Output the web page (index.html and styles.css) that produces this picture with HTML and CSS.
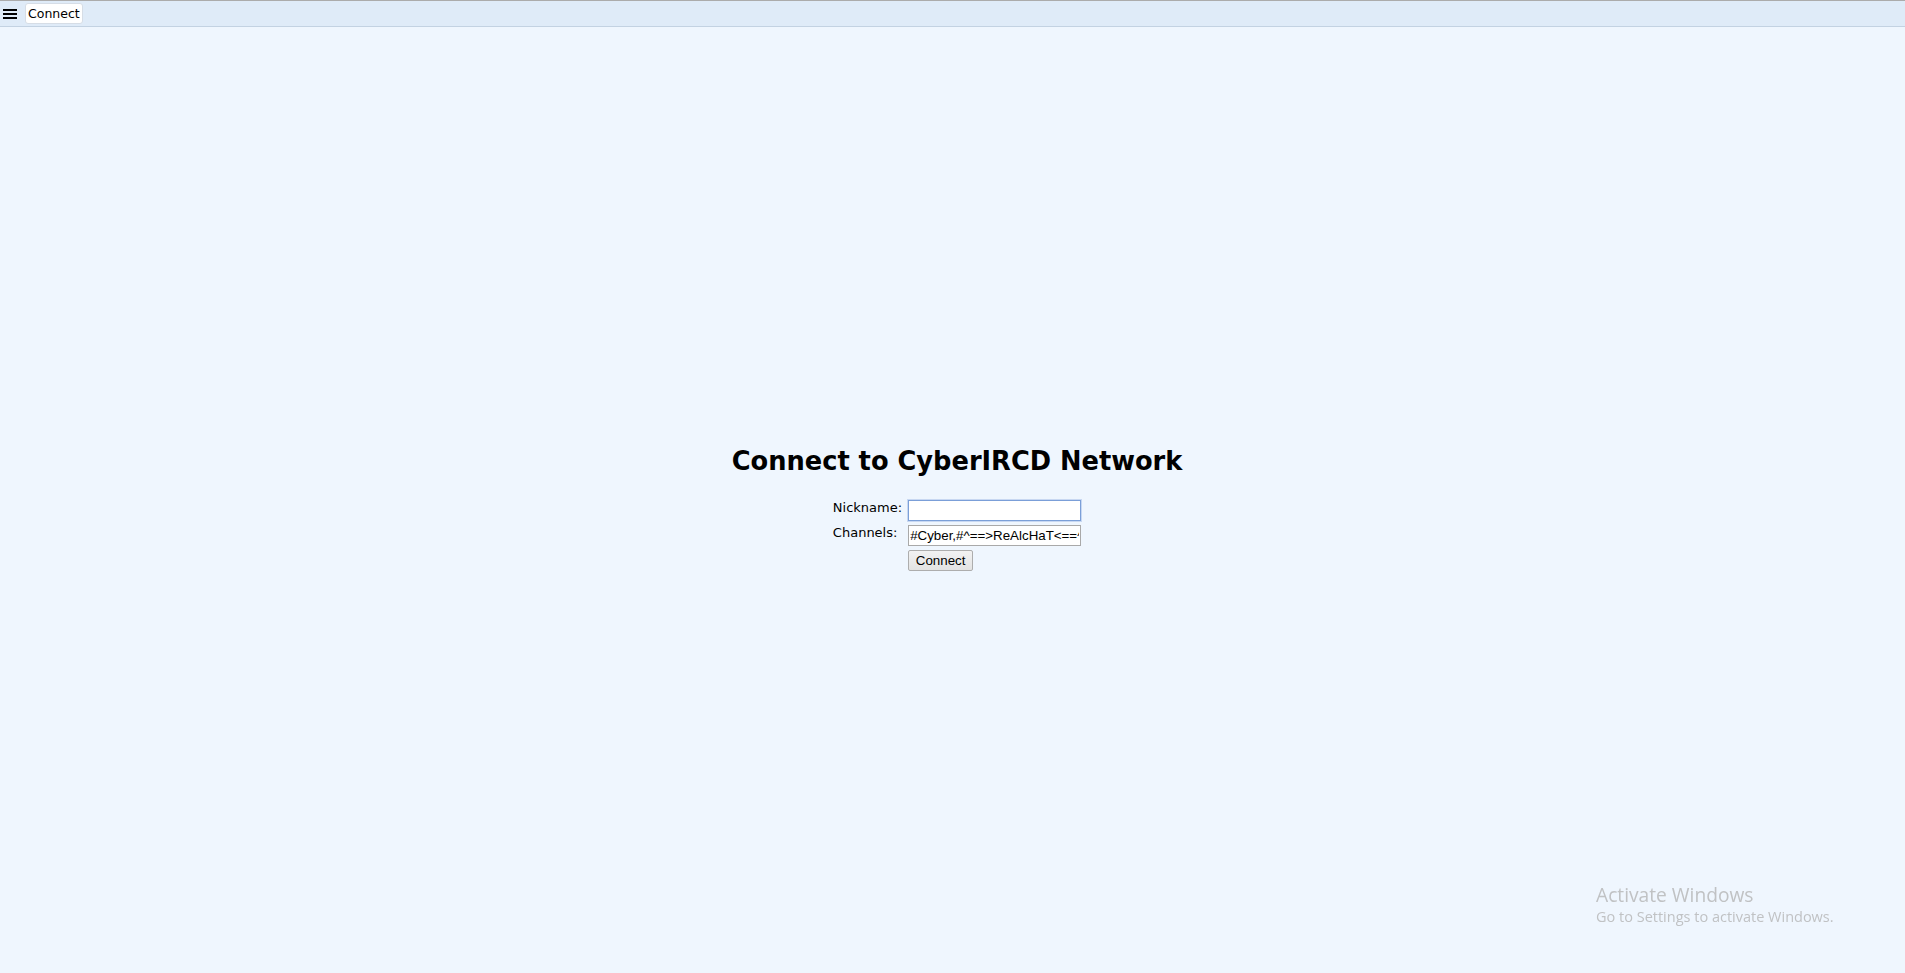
FILE: index.html
```html
<!DOCTYPE html>
<html lang="en">
<head>
<meta charset="utf-8">
<title>CyberIRCD</title>
<link rel="stylesheet" href="styles.css">
</head>
<body>
<div class="app">
  <header class="topbar">
    <button class="menu-btn" aria-label="Menu">
      <svg width="14" height="10" viewBox="0 0 14 10"><rect x="0" y="0" width="14" height="2" fill="#000"/><rect x="0" y="4" width="14" height="2" fill="#000"/><rect x="0" y="8" width="14" height="2" fill="#000"/></svg>
    </button>
    <div class="tab">Connect</div>
  </header>
  <main class="main">
    <div class="connect">
      <h1 class="title">Connect to CyberIRCD Network</h1>
      <form class="form">
        <label class="label" for="nick">Nickname:</label>
        <input id="nick" class="field field-focus" type="text">
        <label class="label" for="chan">Channels:</label>
        <input id="chan" class="field" type="text" value="#Cyber,#^==>ReAlcHaT<==^">
        <span></span>
        <div><button type="button" class="btn">Connect</button></div>
      </form>
    </div>
  </main>
</div>
<div class="watermark">
  <div class="wm-title">Activate Windows</div>
  <div class="wm-sub">Go to Settings to activate Windows.</div>
</div>
</body>
</html>
```
FILE: styles.css
```css
html, body {
  margin: 0;
  padding: 0;
  height: 100%;
}
body {
  background: #eff6fe;
  font-family: "DejaVu Sans", Verdana, sans-serif;
  color: #000;
  overflow: hidden;
}
.app {
  display: flex;
  flex-direction: column;
  height: 100%;
}
.topbar {
  display: flex;
  align-items: center;
  gap: 6px;
  height: 25px;
  border-top: 1px solid #ababab;
  border-bottom: 1px solid #c3d2e2;
  background: #dfebf8;
  padding: 0 0 0 3px;
  box-sizing: content-box;
}
.menu-btn {
  border: 0;
  background: transparent;
  padding: 0;
  width: 16px;
  height: 14px;
  display: flex;
  align-items: center;
  cursor: pointer;
}
.tab {
  background: #fff;
  border: 1px solid #d6dde6;
  border-radius: 3px;
  height: 19px;
  line-height: 19px;
  padding: 0 2px;
  font-size: 12.5px;
}
.main {
  flex: 1;
  display: flex;
  justify-content: center;
  padding: 419px 0 0 9px;
}
.connect {
  display: flex;
  flex-direction: column;
  align-items: center;
}
.title {
  margin: 0 0 24px;
  font-size: 25.7px;
  font-weight: bold;
  line-height: 30px;
}
.form {
  display: grid;
  grid-template-columns: auto 173px;
  column-gap: 6px;
  row-gap: 4px;
  align-items: start;
}
.label {
  font-size: 13px;
  line-height: 15px;
}
.field {
  box-sizing: border-box;
  width: 173px;
  height: 21px;
  margin: 0;
  padding: 1px 1px;
  border: 1px solid #a9a9a9;
  background: #fff;
  font-family: "Liberation Sans", Arial, sans-serif;
  font-size: 13.33px;
  color: #000;
  outline: none;
}
.field-focus {
  border: 1px solid #7b9fd8;
  box-shadow: 0 0 0 1px #c8d8f2;
}
.btn {
  box-sizing: border-box;
  width: 65px;
  height: 21px;
  margin: 0;
  padding: 0;
  border: 1px solid #adadad;
  border-radius: 2px;
  background: linear-gradient(#f2f2f2, #e3e3e3);
  font-family: "Liberation Sans", Arial, sans-serif;
  font-size: 13.33px;
  color: #000;
}
.watermark {
  position: fixed;
  left: 1596px;
  top: 882px;
  color: #c0c2c4;
  font-family: "Open Sans", "Noto Sans", sans-serif;
  pointer-events: none;
}
.wm-title {
  font-size: 19.2px;
  line-height: 25px;
}
.wm-sub {
  font-size: 14.5px;
  line-height: 20px;
}
```
